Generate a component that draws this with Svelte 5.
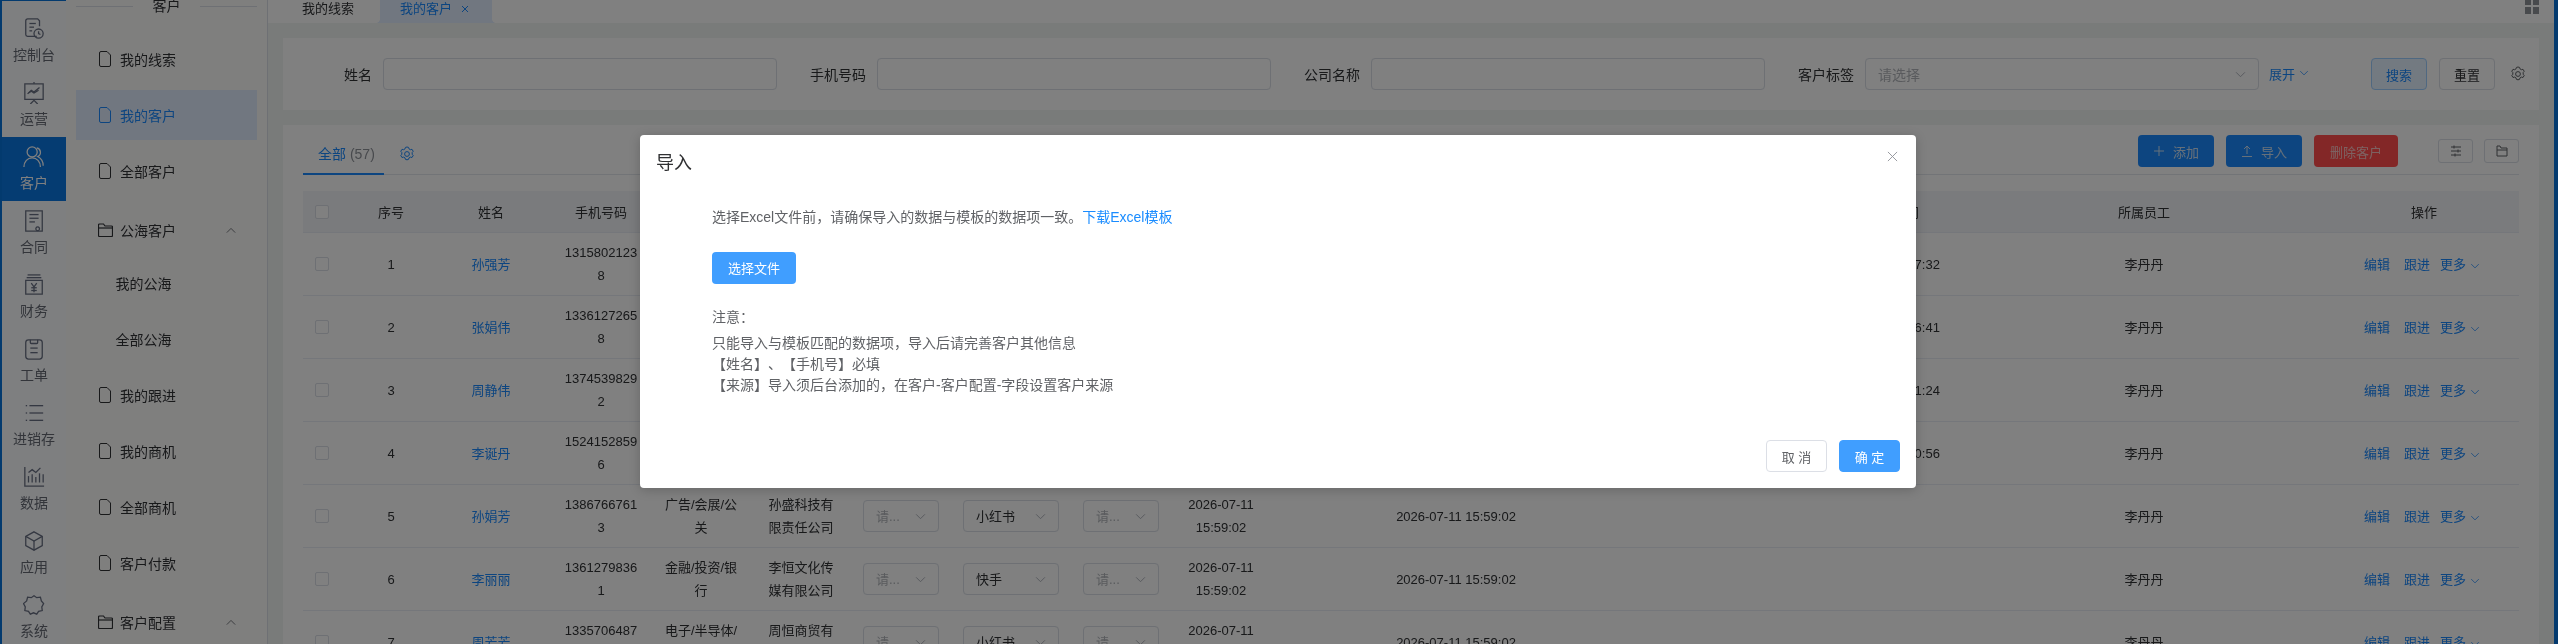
<script>
  const railItems = [
    { label: '控制台', paths: ['M15 20H5a2 2 0 0 1-2-2V3a2 2 0 0 1 2-2h11l2 2v6', 'M7 6h7', 'M7 10h5', 'M7 14h3', 'M17 12a5 5 0 1 0 0 10a5 5 0 0 0 0-10z', 'M17 14.5V17l2 1'] },
    { label: '运营', paths: ['M12 0v2', 'M2 2h20v17H2z', 'M5 13l4-4 3 2 6-5', 'M6 12l3-2 3 2 5-3', 'M8 24l4-4 4 4'] },
    { label: '客户', active: true, paths: ['M10 12a5.5 5.5 0 1 0 0-11a5.5 5.5 0 0 0 0 11z', 'M1 23c0-6 4-10 9-10s9 4 9 10', 'M15 2a5 5 0 0 1 1 9.5c3 1.500 6 5 6 10'] },
    { label: '合同', paths: ['M3 1h18v22H3z', 'M7 5h10', 'M7 9h10', 'M7 13h6', 'M16 18.500a2 2 0 1 0 .01 0z'] },
    { label: '财务', paths: ['M5 1h14', 'M4 4h16', 'M3 7h18v15H3z', 'M9 10l3 4 3-4', 'M12 14v6', 'M9 15h6', 'M9 18h6'] },
    { label: '工单', paths: ['M6 2h12a3 3 0 0 1 3 3v15a3 3 0 0 1-3 3H6a3 3 0 0 1-3-3V5a3 3 0 0 1 3-3z', 'M8 2v3a1 1 0 0 0 1 1h6a1 1 0 0 0 1-1V2', 'M8 11h8', 'M8 16h8'] },
    { label: '进销存', paths: ['M3 4h1.500', 'M7 4h15', 'M3 12h1.500', 'M7 12h15', 'M3 20h1.500', 'M7 20h15'] },
    { label: '数据', paths: ['M2 1v21h21', 'M6 18v-7', 'M10 18v-9', 'M14 18v-6', 'M18 18V8', 'M22 18v-9', 'M6 7l4-3 4 3 5-5'] },
    { label: '应用', paths: ['M12 2l9 5v10l-9 5-9-5V7z', 'M3 7l9 5 9-5', 'M12 12v10'] },
    { label: '系统', paths: ['M12 2l3 2 4-.5 1 4 2.500 3-2 3.500.5 4-4 1-2 3-3.500-1.500-3.500 1.500-2-3-4-1 .5-4-2-3.500L4 7.500l1-4 4 .5z'] },
  ];

  const rows = [
    { n: 1, name: '孙强芳', phone: '13158021238', ind: '教育/培训/机构', co: '孙强科技有限责任公司', src: '抖音', d2: '2026-07-11 15:59:02', last: '2026-07-11 16:07:32' },
    { n: 2, name: '张娟伟', phone: '13361272658', ind: '教育/培训/机构', co: '张娟文化传媒有限公司', src: '快手', d2: '2026-07-11 15:59:02', last: '2026-07-11 16:06:41' },
    { n: 3, name: '周静伟', phone: '13745398292', ind: '教育/培训/机构', co: '周静商贸有限公司', src: '抖音', d2: '2026-07-11 15:59:02', last: '2026-07-11 16:01:24' },
    { n: 4, name: '李诞丹', phone: '15241528596', ind: '教育/培训/机构', co: '李诞科技有限公司', src: '小红书', d2: '2026-07-11 15:59:02', last: '2026-07-11 16:00:56' },
    { n: 5, name: '孙娟芳', phone: '13867667613', ind: '广告/会展/公关', co: '孙盛科技有限责任公司', src: '小红书', d2: '2026-07-11 15:59:02', last: '' },
    { n: 6, name: '李丽丽', phone: '13612798361', ind: '金融/投资/银行', co: '李恒文化传媒有限公司', src: '快手', d2: '2026-07-11 15:59:02', last: '' },
    { n: 7, name: '周芳芳', phone: '13357064875', ind: '电子/半导体/芯片', co: '周恒商贸有限公司', src: '小红书', d2: '2026-07-11 15:59:02', last: '' },
  ];
  const widths = [38, 100, 100, 120, 80, 120, 80, 140, 80, 120, 350, 69, 360, 168, 101, 190];
</script>

{#snippet chev(cls)}
  <svg class="chev {cls}" viewBox="0 0 12 8"><path d="M1 1.500l5 5 5-5" /></svg>
{/snippet}

{#snippet gear(cls)}
  <svg class="gear {cls}" viewBox="0 0 16 16"><path d="M8 1l1.500.4.5 1.500 1.500.8 1.500-.4 1.200 2-1 1.200v1.800l1 1.200-1.200 2-1.500-.4-1.500.8-.5 1.500-1.500.4-1.500-.4-.5-1.500-1.500-.8-1.500.4-1.200-2 1-1.200V6.500l-1-1.200 1.200-2 1.500.4 1.500-.8.5-1.500z" /><circle cx="8" cy="8" r="2.400" /></svg>
{/snippet}

{#snippet doc()}
  <svg class="doc" viewBox="0 0 12 16"><path d="M2 .5h6l3.500 3.500v10a1.500 1.500 0 0 1-1.500 1.500H2A1.500 1.500 0 0 1 .5 14V2A1.500 1.500 0 0 1 2 .5z" /></svg>
{/snippet}

{#snippet folder()}
  <svg class="folder" viewBox="0 0 15 14"><path d="M1.500 1h4l1.500 2h6.500a1 1 0 0 1 1 1v8.500a1 1 0 0 1-1 1h-12a1 1 0 0 1-1-1V2a1 1 0 0 1 1-1z" /><path d="M.5 5h14" /></svg>
{/snippet}

<div class="page">
  <aside class="rail">
    {#each railItems as item}
      <div class="rail-item" class:active={item.active}>
        <svg viewBox="0 0 24 24">
          {#each item.paths as d}<path {d} />{/each}
        </svg>
        <span>{item.label}</span>
      </div>
    {/each}
  </aside>

  <nav class="side">
    <div class="side-head"><i></i><span>客户</span><i></i></div>
    <div class="side-item">{@render doc()}我的线索</div>
    <div class="side-item current">{@render doc()}我的客户</div>
    <div class="side-item">{@render doc()}全部客户</div>
    <div class="side-item group">{@render folder()}公海客户<svg class="up" viewBox="0 0 12 8"><path d="M1 6.500l5-5 5 5" /></svg></div>
    <div class="side-item sub">我的公海</div>
    <div class="side-item sub">全部公海</div>
    <div class="side-item">{@render doc()}我的跟进</div>
    <div class="side-item">{@render doc()}我的商机</div>
    <div class="side-item">{@render doc()}全部商机</div>
    <div class="side-item">{@render doc()}客户付款</div>
    <div class="side-item group">{@render folder()}客户配置<svg class="up" viewBox="0 0 12 8"><path d="M1 6.500l5-5 5 5" /></svg></div>
  </nav>

  <main class="main">
    <header class="tabs">
      <span class="tab">我的线索</span>
      <span class="tab on">我的客户<svg class="tab-x" viewBox="0 0 8 8"><path d="M1 1l6 6M7 1L1 7" /></svg></span>
      <span class="grid-icon"><i></i><i></i><i></i><i></i></span>
    </header>

    <section class="card filter">
      <div class="field"><label>姓名</label><div class="input"></div></div>
      <div class="field"><label>手机号码</label><div class="input"></div></div>
      <div class="field"><label>公司名称</label><div class="input"></div></div>
      <div class="field"><label>客户标签</label><div class="input select"><em>请选择</em>{@render chev('big')}</div></div>
      <span class="expand">展开{@render chev('small')}</span>
      <button class="btn plain search">搜索</button>
      <button class="btn plain">重置</button>
      {@render gear('dark')}
    </section>

    <section class="card list">
      <div class="toolbar">
        <div class="all">全部 <span>(57)</span></div>
        {@render gear('blue')}
        <div class="tools">
          <button class="btn solid"><svg viewBox="0 0 12 12"><path d="M6 1v10M1 6h10" /></svg>添加</button>
          <button class="btn solid"><svg viewBox="0 0 12 12"><path d="M1 11.500h10M6 9V1.500M3 4l3-3 3 3" /></svg>导入</button>
          <button class="btn danger">删除客户</button>
          <button class="mini first"><svg viewBox="0 0 12 12"><path d="M1 2h10M1 6h10M1 10h10M4 .5v3M8 4.500v3M5 8.500v3" /></svg></button>
          <button class="mini"><svg viewBox="0 0 12 12"><path d="M1 1h3l1 2h6v8H1zM1 5h10" /></svg></button>
        </div>
      </div>

      <table>
        <colgroup>
          {#each widths as w}<col style="width:{w}px" />{/each}
        </colgroup>
        <thead>
          <tr>
            <th class="chk"><i class="box"></i></th>
            <th>序号</th><th>姓名</th><th>手机号码</th><th>所属行业</th><th>公司名称</th>
            <th>等级</th><th>来源</th><th>状态</th><th>创建时间</th><th>更新时间</th><th></th>
            <th>最后跟进时间</th><th>所属员工</th><th></th><th>操作</th>
          </tr>
        </thead>
        <tbody>
          {#each rows as r}
            <tr>
              <td class="chk"><i class="box"></i></td>
              <td>{r.n}</td>
              <td><a>{r.name}</a></td>
              <td class="wrap">{r.phone}</td>
              <td class="tight">{r.ind}</td>
              <td class="wrap">{r.co}</td>
              <td><div class="sel s1"><em>请...</em>{@render chev('big')}</div></td>
              <td><div class="sel s2">{r.src}{@render chev('big')}</div></td>
              <td><div class="sel s1"><em>请...</em>{@render chev('big')}</div></td>
              <td class="date">2026-07-11<br />15:59:02</td>
              <td>{r.d2}</td>
              <td></td>
              <td>{r.last}</td>
              <td>李丹丹</td>
              <td></td>
              <td class="ops"><a>编辑</a><a>跟进</a><a>更多</a>{@render chev('small')}</td>
            </tr>
          {/each}
        </tbody>
      </table>
    </section>
  </main>
  <div class="edge"></div>

  <div class="overlay">
    <div class="dialog">
      <div class="d-head">
        <h2>导入</h2>
        <svg class="close" viewBox="0 0 12 12"><path d="M1 1l10 10M11 1L1 11" /></svg>
      </div>
      <div class="d-body">
        <p class="intro">选择Excel文件前，请确保导入的数据与模板的数据项一致。<a>下载Excel模板</a></p>
        <button class="pick">选择文件</button>
        <p class="note">注意：</p>
        <p class="lines">只能导入与模板匹配的数据项，导入后请完善客户其他信息<br />【姓名】、【手机号】必填<br />【来源】导入须后台添加的，在客户-客户配置-字段设置客户来源</p>
      </div>
      <div class="d-foot">
        <button class="cancel">取 消</button>
        <button class="ok">确 定</button>
      </div>
    </div>
  </div>
</div>

<style>
  :global(body) {
    margin: 0;
    overflow: hidden;
    background: #fff;
  }
  .page {
    position: relative;
    display: flex;
    width: 2558px;
    height: 644px;
    overflow: hidden;
    font-family: "Liberation Sans", "Noto Sans CJK SC", sans-serif;
    font-size: 14px;
    color: #303133;
    background: #fff;
    text-spacing-trim: space-all;
  }
  svg path, svg circle { fill: none; stroke: currentColor; }

  .rail {
    flex: none;
    width: 64px;
    border-left: 2px solid #1672c8;
    border-top: 1px solid #1672c8;
    padding-top: 8px;
    background: #fcfdff;
    box-sizing: content-box;
  }
  .rail-item {
    height: 64px;
    display: flex;
    flex-direction: column;
    align-items: center;
    padding-top: 9px;
    box-sizing: border-box;
    color: #666a73;
    line-height: 18px;
  }
  .rail-item svg { width: 22px; height: 22px; margin-bottom: 6px; stroke-width: 1.400; color: #6a7080; }
  .rail-item.active { background: #1a75d0; color: #fff; }
  .rail-item.active svg { color: #fff; }

  .side {
    flex: none;
    height: 644px;
    padding: 0 10px;
    box-sizing: content-box;
    width: 181px;
    border-right: 1px solid #dcdfe6;
    background: #fdfdfd;
  }
  .side-head {
    display: flex;
    align-items: center;
    height: 12px;
    margin-bottom: 22px;
    line-height: 12px;
  }
  .side-head i { flex: 1; height: 1px; background: #dcdfe6; }
  .side-head span { width: 67px; text-align: center; margin-top: -1px; }
  .side-item {
    display: flex;
    align-items: center;
    height: 50px;
    margin-bottom: 6px;
    padding-left: 23px;
    color: #303133;
  }
  .side-item.current { background: #e4eefc; color: #2b88ea; }
  .side-item.group { position: relative; margin-top: 9px; margin-bottom: 3px; }
  .side-item.sub { padding-left: 39.500px; }
  .doc { width: 12px; height: 16px; margin-right: 9px; stroke-width: 1; }
  .folder { width: 15px; height: 14px; margin-left: -1px; margin-right: 7px; stroke-width: 1.200; }
  .up { width: 10px; height: 7px; margin-left: auto; margin-right: 21px; stroke-width: 1; color: #606266; }

  .main {
    flex: none;
    width: 2286px;
    background: #f2f5f4;
    display: flex;
    flex-direction: column;
  }
  .tabs {
    display: flex;
    height: 23px;
    flex: none;
    background: #fff;
    font-size: 13px;
    align-items: center;
    padding-left: 34px;
    position: relative;
  }
  .tab { line-height: 18px; margin-top: -5px; width: 78px; }
  .tab.on {
    position: relative;
    display: flex;
    align-items: center;
    width: 112px;
    height: 23px;
    margin-top: 0;
    padding: 0 0 5px 20px;
    box-sizing: border-box;
    background: #e3eefc;
    color: #2b88ea;
  }
  .tab.on::before, .tab.on::after {
    content: "";
    position: absolute;
    bottom: 0;
    width: 5px;
    height: 5px;
  }
  .tab.on::before { left: -5px; background: radial-gradient(circle at 0 0, transparent 5px, #e3eefc 5.500px); }
  .tab.on::after { right: -5px; background: radial-gradient(circle at 100% 0, transparent 5px, #e3eefc 5.500px); }
  .tab-x { width: 8px; height: 8px; margin-left: 9px; stroke-width: 1; }
  .grid-icon {
    margin-left: auto;
    margin-right: 15px;
    align-self: flex-start;
    display: grid;
    grid-template-columns: 6px 6px;
    grid-template-rows: 5px 7px;
    gap: 2px;
  }
  .grid-icon i { background: #909399; }

  .card { background: #fff; margin: 0 15px; }
  .filter {
    display: flex;
    align-items: center;
    height: 72px;
    margin-top: 15px;
    margin-bottom: 15px;
    flex: none;
  }
  .field { display: flex; align-items: center; width: 494px; }
  .field label { width: 89px; margin-right: 11px; text-align: right; flex: none; }
  .input {
    width: 394px;
    height: 32px;
    border: 1px solid #dcdfe6;
    border-radius: 4px;
    box-sizing: border-box;
  }
  .select { display: flex; align-items: center; justify-content: space-between; padding: 0 12px; }
  em { font-style: normal; color: #b4b6bb; }
  .chev { stroke-width: 1; color: #a8abb2; flex: none; }
  .chev.big { width: 11px; height: 7px; }
  .chev.small { width: 10px; height: 6px; margin-left: 4px; color: #2b88ea; }
  .expand { display: flex; align-items: center; font-size: 13px; color: #2b88ea; margin-left: 10px; margin-top: -2px; }
  .btn {
    font: inherit;
    font-size: 13px;
    height: 32px;
    border-radius: 4px;
    box-sizing: border-box;
    display: inline-flex;
    align-items: center;
    justify-content: center;
    padding: 0;
  }
  .plain { width: 56px; background: #fff; border: 1px solid #dcdfe6; color: #303133; margin-left: 12px; }
  .plain.search { margin-left: 62px; background: #e8f3ff; border-color: #a6cff8; color: #2b88ea; }
  .gear { width: 16px; height: 16px; stroke-width: 1; flex: none; }
  .gear.dark { margin-left: 15px; color: #606266; }
  .gear.blue { margin-left: 15px; color: #2b88ea; }

  .list { flex: 1; padding: 0 20px; min-height: 0; }
  .toolbar {
    display: flex;
    align-items: flex-start;
    height: 50px;
    padding-top: 10px;
    box-sizing: border-box;
    border-bottom: 1px solid #e4e7ed;
    position: relative;
  }
  .all {
    width: 81px;
    height: 40px;
    box-sizing: border-box;
    padding-left: 15px;
    line-height: 38px;
    margin-bottom: -1px;
    color: #2b88ea;
    border-bottom: 2px solid #2b88ea;
    font-size: 14px;
  }
  .all span { color: #909399; }
  .toolbar .gear { margin-top: 11px; }
  .tools { display: flex; align-items: center; margin-left: auto; gap: 12px; height: 32px; }
  .solid { width: 76px; background: #2b88ea; border: 0; color: #cfe0f0; }
  .solid svg { width: 12px; height: 12px; margin-right: 8px; stroke-width: 1; }
  .danger { width: 84px; background: #ee5555; border: 0; color: #f3c4c4; }
  .mini {
    width: 35px;
    height: 24px;
    border: 1px solid #dcdfe6;
    background: #fff;
    border-radius: 3px;
    padding: 0;
    color: #606266;
    margin-left: -1px;
    display: flex;
    align-items: center;
    justify-content: center;
  }
  .mini.first { margin-left: 28px; }
  .mini svg { width: 12px; height: 12px; stroke-width: 1; }

  table {
    table-layout: fixed;
    border-collapse: collapse;
    width: 2216px;
    margin-top: 16px;
    font-size: 13px;
    text-align: center;
  }
  th { height: 41px; padding: 0; background: #f4f6f9; font-weight: 400; border-bottom: 1px solid #ebeef5; }
  td { height: 63px; padding: 0; border-bottom: 1px solid #ebeef5; box-sizing: border-box; line-height: 23px; }
  .wrap { padding: 0 22px; word-break: break-all; }
  .tight { padding: 0 2px; word-break: break-all; }
  .box {
    display: block;
    width: 14px;
    height: 14px;
    margin-left: 12px;
    box-sizing: border-box;
    border: 1px solid #dcdfe6;
    border-radius: 2px;
    background: #fff;
  }
  a { color: #2b88ea; }
  .sel {
    display: flex;
    align-items: center;
    justify-content: space-between;
    height: 32px;
    box-sizing: border-box;
    border: 1px solid #dcdfe6;
    border-radius: 4px;
    padding: 0 12px;
    margin: 0 auto;
    text-align: left;
  }
  .s1 { width: 76px; }
  .s2 { width: 96px; }
  .ops { text-align: left; padding-left: 35px; }
  .ops a { margin-right: 14px; }
  .ops a:nth-of-type(2) { margin-right: 10px; }
  .ops a:nth-of-type(3) { margin-right: 0; }
  .ops :global(svg) { margin-left: 7px; }

  .edge { flex: none; width: 4px; background: #1672c8; }

  .overlay {
    position: absolute;
    inset: 0;
    backdrop-filter: brightness(0.5) saturate(1.2);
    padding: 135px 0 0 640px;
    box-sizing: border-box;
  }
  .dialog {
    width: 1276px;
    height: 353px;
    background: #fff;
    border-radius: 4px;
    box-shadow: 0 2px 12px rgba(0, 0, 0, 0.2);
    display: flex;
    flex-direction: column;
  }
  .d-head { display: flex; justify-content: space-between; padding: 16px 18px 0 16px; height: 54px; box-sizing: border-box; }
  h2 { margin: 0; font-size: 18px; font-weight: 400; line-height: 24px; color: #303133; }
  .close { width: 11px; height: 11px; margin-top: 0; stroke-width: 1; color: #909399; }
  .d-body { padding: 18px 72px 0; flex: 1; color: #606266; line-height: 21px; }
  p { margin: 0; }
  .intro a { color: #1a8cff; }
  .pick {
    display: block;
    width: 84px;
    height: 32px;
    margin: 24px 0 23px;
    border: 0;
    border-radius: 4px;
    background: #409eff;
    color: #fff;
    font: inherit;
    font-size: 13px;
  }
  .note { margin-bottom: 5px; }
  .d-foot { display: flex; justify-content: flex-end; gap: 12px; padding: 0 16px 16px; }
  .d-foot button { font: inherit; font-size: 13px; height: 32px; width: 61px; border-radius: 4px; padding: 0; box-sizing: border-box; }
  .cancel { background: #fff; border: 1px solid #dcdfe6; color: #606266; }
  .ok { background: #409eff; border: 1px solid #409eff; color: #fff; }
</style>
